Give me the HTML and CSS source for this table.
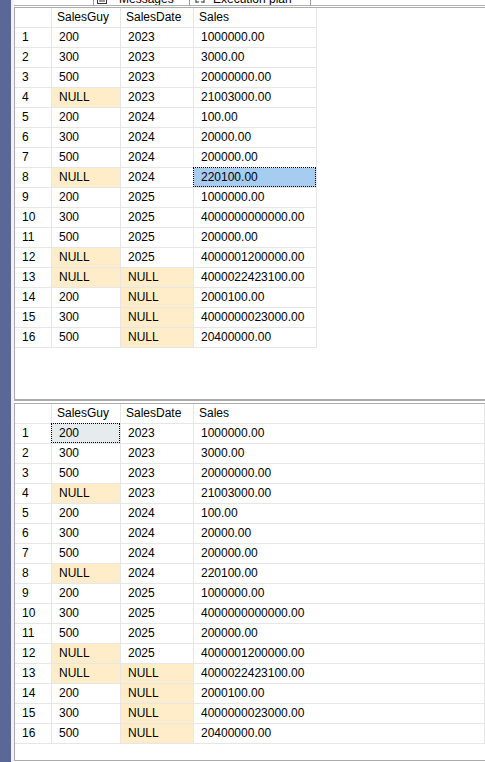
FILE: index.html
```html
<!DOCTYPE html>
<html>
<head>
<meta charset="utf-8">
<link rel="stylesheet" href="styles.css">
</head>
<body>
<div class="app">
  <div class="sidebar"></div>
  <div class="gutter"></div>
  <div class="main">
    <div class="tabstrip">
      <div class="tab tab-msg">
        <svg class="ticon" width="10" height="12" viewBox="0 0 10 12"><rect x="0.5" y="0.5" width="9" height="11" fill="#fff" stroke="#333"/><line x1="2" y1="9" x2="8" y2="9" stroke="#333"/></svg>
        <span class="tlabel">Messages</span>
      </div>
      <div class="tab tab-plan">
        <svg class="ticon" width="10" height="12" viewBox="0 0 10 12"><path d="M1 10 H4 M6 10 H9 M1 5 V11 M9 5 V11" stroke="#333" fill="none"/></svg>
        <span class="tlabel">Execution plan</span>
      </div>
    </div>
    <div class="gap"></div>
    <div class="panel panel-top">
      <div class="grid grid-fixed">
        <div class="c h rn"></div><div class="c h">SalesGuy</div><div class="c h">SalesDate</div><div class="c h">Sales</div>
        <div class="c rn">1</div><div class="c">200</div><div class="c">2023</div><div class="c">1000000.00</div>
        <div class="c rn">2</div><div class="c">300</div><div class="c">2023</div><div class="c">3000.00</div>
        <div class="c rn">3</div><div class="c">500</div><div class="c">2023</div><div class="c">20000000.00</div>
        <div class="c rn">4</div><div class="c null">NULL</div><div class="c">2023</div><div class="c">21003000.00</div>
        <div class="c rn">5</div><div class="c">200</div><div class="c">2024</div><div class="c">100.00</div>
        <div class="c rn">6</div><div class="c">300</div><div class="c">2024</div><div class="c">20000.00</div>
        <div class="c rn">7</div><div class="c">500</div><div class="c">2024</div><div class="c">200000.00</div>
        <div class="c rn">8</div><div class="c null">NULL</div><div class="c">2024</div><div class="c sel-blue">220100.00</div>
        <div class="c rn">9</div><div class="c">200</div><div class="c">2025</div><div class="c">1000000.00</div>
        <div class="c rn">10</div><div class="c">300</div><div class="c">2025</div><div class="c">4000000000000.00</div>
        <div class="c rn">11</div><div class="c">500</div><div class="c">2025</div><div class="c">200000.00</div>
        <div class="c rn">12</div><div class="c null">NULL</div><div class="c">2025</div><div class="c">4000001200000.00</div>
        <div class="c rn">13</div><div class="c null">NULL</div><div class="c null">NULL</div><div class="c">4000022423100.00</div>
        <div class="c rn">14</div><div class="c">200</div><div class="c null">NULL</div><div class="c">2000100.00</div>
        <div class="c rn">15</div><div class="c">300</div><div class="c null">NULL</div><div class="c">4000000023000.00</div>
        <div class="c rn">16</div><div class="c">500</div><div class="c null">NULL</div><div class="c">20400000.00</div>
      </div>
    </div>
    <div class="panel panel-bottom">
      <div class="grid grid-fill">
        <div class="c h rn"></div><div class="c h">SalesGuy</div><div class="c h">SalesDate</div><div class="c h">Sales</div>
        <div class="c rn">1</div><div class="c sel-gray">200</div><div class="c">2023</div><div class="c">1000000.00</div>
        <div class="c rn">2</div><div class="c">300</div><div class="c">2023</div><div class="c">3000.00</div>
        <div class="c rn">3</div><div class="c">500</div><div class="c">2023</div><div class="c">20000000.00</div>
        <div class="c rn">4</div><div class="c null">NULL</div><div class="c">2023</div><div class="c">21003000.00</div>
        <div class="c rn">5</div><div class="c">200</div><div class="c">2024</div><div class="c">100.00</div>
        <div class="c rn">6</div><div class="c">300</div><div class="c">2024</div><div class="c">20000.00</div>
        <div class="c rn">7</div><div class="c">500</div><div class="c">2024</div><div class="c">200000.00</div>
        <div class="c rn">8</div><div class="c null">NULL</div><div class="c">2024</div><div class="c">220100.00</div>
        <div class="c rn">9</div><div class="c">200</div><div class="c">2025</div><div class="c">1000000.00</div>
        <div class="c rn">10</div><div class="c">300</div><div class="c">2025</div><div class="c">4000000000000.00</div>
        <div class="c rn">11</div><div class="c">500</div><div class="c">2025</div><div class="c">200000.00</div>
        <div class="c rn">12</div><div class="c null">NULL</div><div class="c">2025</div><div class="c">4000001200000.00</div>
        <div class="c rn">13</div><div class="c null">NULL</div><div class="c null">NULL</div><div class="c">4000022423100.00</div>
        <div class="c rn">14</div><div class="c">200</div><div class="c null">NULL</div><div class="c">2000100.00</div>
        <div class="c rn">15</div><div class="c">300</div><div class="c null">NULL</div><div class="c">4000000023000.00</div>
        <div class="c rn">16</div><div class="c">500</div><div class="c null">NULL</div><div class="c">20400000.00</div>
      </div>
    </div>
  </div>
</div>
</body>
</html>
```
FILE: styles.css
```css
html, body {
  margin: 0;
  padding: 0;
  background: #ffffff;
}
body {
  width: 485px;
  height: 762px;
  overflow: hidden;
  font-family: "Liberation Sans", Arial, sans-serif;
  font-size: 12px;
  color: #000;
}
.app {
  display: flex;
  height: 762px;
}
.sidebar {
  width: 11px;
  background: #5a6898;
  flex: none;
}
.gutter {
  width: 3px;
  background: #f2f2f2;
  flex: none;
}
.main {
  flex: 1;
  display: flex;
  flex-direction: column;
  min-width: 0;
}
.tabstrip {
  height: 5px;
  border-bottom: 1px solid #b0b0b0;
  display: flex;
  padding-left: 79px;
  overflow: hidden;
  flex: none;
}
.tab {
  display: flex;
  align-items: flex-start;
  height: 5px;
  overflow: hidden;
  border-right: 1px solid #9a9a9a;
  box-sizing: border-box;
}
.tab-msg {
  width: 97px;
  border-left: 1px solid #9a9a9a;
  padding-left: 3px;
}
.tab-plan {
  width: 121px;
  padding-left: 5px;
}
.ticon {
  margin-top: -8px;
  flex: none;
}
.tlabel {
  line-height: 14px;
  margin-top: -8px;
  margin-left: 12px;
  white-space: nowrap;
}
.tab-plan .tlabel {
  margin-left: 8px;
}
.gap {
  height: 1px;
  flex: none;
}
.panel {
  border-left: 1px solid #acacac;
  border-top: 1px solid #acacac;
  flex: none;
}
.panel-top {
  height: 391px;
  border-bottom: 2px solid #acacac;
}
.panel-bottom {
  margin-top: 2px;
  height: 356px;
  border-bottom: 1px solid #acacac;
}
.grid {
  display: grid;
  grid-auto-rows: 20px;
}
.grid-fixed {
  grid-template-columns: 37px 69px 73px 123px;
  width: 302px;
}
.grid-fill {
  grid-template-columns: 37px 69px 73px 1fr;
}
.c {
  box-sizing: border-box;
  border-right: 1px solid #e6e6e6;
  border-bottom: 1px solid #e6e6e6;
  line-height: 19px;
  padding-left: 7px;
  white-space: nowrap;
  overflow: hidden;
  position: relative;
}
.c.h {
  padding-left: 5px;
}
.c.rn {
  padding-left: 7px;
}
.null {
  background: #ffedc9;
}
.sel-blue {
  background: #a6cdf0;
  overflow: visible;
}
.sel-gray {
  background: #e6ebee;
  overflow: visible;
}
.sel-blue::after,
.sel-gray::after {
  content: "";
  position: absolute;
  top: -1px;
  left: -1px;
  right: 0;
  bottom: 0;
  border: 1px dotted #000;
}
```
